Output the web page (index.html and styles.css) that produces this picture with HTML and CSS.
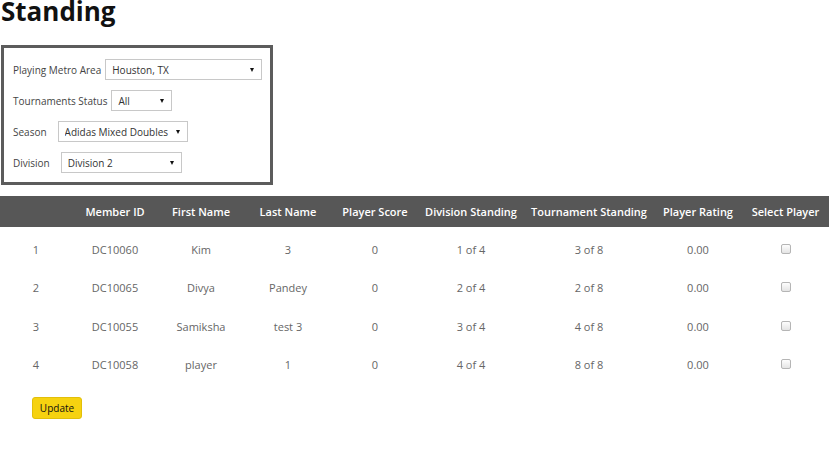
FILE: index.html
```html
<html>
  <head>
    <title>Standing</title>
    <link rel="stylesheet" href="styles.css">
  </head>
<body>
  <h1 class="page-title">Standing</h1>

  <div class="filters">
    <div class="filter-row">
      <label for="metro">Playing Metro Area</label>
      <span class="select-wrap">
        <select id="metro" class="sel-metro">
          <option>Houston, TX</option>
        </select>
      </span>
    </div>
    <div class="filter-row">
      <label for="status">Tournaments Status</label>
      <span class="select-wrap">
        <select id="status" class="sel-status">
          <option>All</option>
        </select>
      </span>
    </div>
    <div class="filter-row">
      <label for="season" class="wide">Season</label>
      <span class="select-wrap">
        <select id="season" class="sel-season">
          <option>Adidas Mixed Doubles</option>
        </select>
      </span>
    </div>
    <div class="filter-row">
      <label for="division" class="wide">Division</label>
      <span class="select-wrap">
        <select id="division" class="sel-division">
          <option>Division 2</option>
        </select>
      </span>
    </div>
  </div>

  <table class="standings">
    <colgroup>
      <col class="c-num">
      <col class="c-id">
      <col class="c-first">
      <col class="c-last">
      <col class="c-score">
      <col class="c-div">
      <col class="c-tour">
      <col class="c-rating">
      <col class="c-select">
    </colgroup>
    <thead>
      <tr>
        <th></th>
        <th>Member ID</th>
        <th>First Name</th>
        <th>Last Name</th>
        <th>Player Score</th>
        <th>Division Standing</th>
        <th>Tournament Standing</th>
        <th>Player Rating</th>
        <th>Select Player</th>
      </tr>
    </thead>
    <tbody>
      <tr>
        <td>1</td><td>DC10060</td><td>Kim</td><td>3</td><td>0</td>
        <td>1 of 4</td><td>3 of 8</td><td>0.00</td><td><input type="checkbox"></td>
      </tr>
      <tr>
        <td>2</td><td>DC10065</td><td>Divya</td><td>Pandey</td><td>0</td>
        <td>2 of 4</td><td>2 of 8</td><td>0.00</td><td><input type="checkbox"></td>
      </tr>
      <tr>
        <td>3</td><td>DC10055</td><td>Samiksha</td><td>test 3</td><td>0</td>
        <td>3 of 4</td><td>4 of 8</td><td>0.00</td><td><input type="checkbox"></td>
      </tr>
      <tr>
        <td>4</td><td>DC10058</td><td>player</td><td>1</td><td>0</td>
        <td>4 of 4</td><td>8 of 8</td><td>0.00</td><td><input type="checkbox"></td>
      </tr>
    </tbody>
  </table>

  <button class="btn-update">Update</button>
</body>
</html>
```

FILE: styles.css
```css
body {
  margin: 0;
  font-family: "Open Sans", "Noto Sans", sans-serif;
  color: #555;
  background: #fff;
}

.page-title {
  margin: 0 0 0 1px;
  font-size: 26px;
  font-weight: 700;
  line-height: 21px;
  padding-top: 1px;
  color: #111;
}

/* filter panel */
.filters {
  margin: 23px 0 0 1px;
  padding: 11px 0 9px 9px;
  border: 3px solid #5c5c5c;
  width: 257px;
}

.filter-row {
  display: flex;
  align-items: center;
  height: 21px;
  margin-bottom: 10px;
}

.filter-row:last-child {
  margin-bottom: 0;
}

.filter-row label {
  font-size: 10px;
  color: #444;
  margin-right: 4px;
}

.filter-row label.wide {
  margin-right: 11px;
}

.select-wrap {
  position: relative;
  display: inline-block;
}

.select-wrap::after {
  content: "";
  position: absolute;
  right: 8px;
  top: 9px;
  border-left: 2.5px solid transparent;
  border-right: 2.5px solid transparent;
  border-top: 4px solid #111;
  pointer-events: none;
}

select {
  -webkit-appearance: none;
  appearance: none;
  height: 21px;
  padding: 0 0 0 6px;
  border: 1px solid #c8c8c8;
  border-radius: 0;
  background: #fff;
  font-family: inherit;
  font-size: 10px;
  color: #333;
}

.sel-metro { width: 157px; }
.sel-status { width: 61px; }
.sel-season { width: 130px; }
.sel-division { width: 121px; }

/* standings table */
.standings {
  width: 829px;
  margin-top: 11px;
  border-collapse: collapse;
  table-layout: fixed;
}

.c-num { width: 72px; }
.c-id { width: 86px; }
.c-first { width: 86px; }
.c-last { width: 88px; }
.c-score { width: 86px; }
.c-div { width: 106px; }
.c-tour { width: 130px; }
.c-rating { width: 88px; }
.c-select { width: 87px; }

.standings th {
  height: 31px;
  padding: 0;
  background: #575757;
  color: #fff;
  font-size: 11px;
  font-weight: 600;
  text-align: center;
}

.standings td {
  height: 38.8px;
  padding: 0;
  font-size: 11px;
  color: #666;
  text-align: center;
}

.standings tbody tr:first-child td {
  height: 41px;
  padding-top: 3px;
  box-sizing: border-box;
}

.standings td input {
  -webkit-appearance: none;
  appearance: none;
  display: inline-block;
  vertical-align: middle;
  width: 10px;
  height: 10px;
  margin: -1px 0 0 0;
  border: 1px solid #b5b5b5;
  border-radius: 2px;
  background: linear-gradient(#fdfdfd, #e4e4e4);
}

.btn-update {
  margin: 13px 0 0 32px;
  width: 50px;
  height: 22px;
  padding: 0;
  font-family: inherit;
  font-size: 10px;
  color: #111;
  background: #f6d210;
  border: 1px solid #e2bf0a;
  border-radius: 3px;
}
```
